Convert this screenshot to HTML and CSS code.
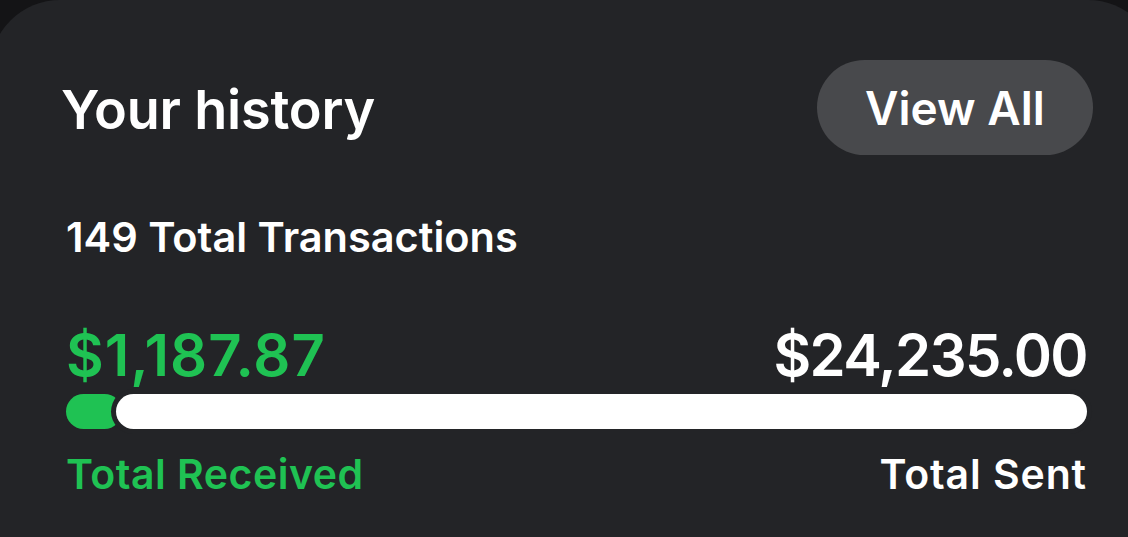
FILE: index.html
```html
<!DOCTYPE html>
<html lang="en">
<head>
<meta charset="utf-8">
<link rel="stylesheet" href="styles.css">
<title>Your history</title>
</head>
<body>
<section class="card">
  <header class="head">
    <h1 class="title">Your history</h1>
    <button class="view-all">View All</button>
  </header>
  <p class="count">149 Total Transactions</p>
  <div class="amounts">
    <span class="amt amt-received">$1,187.87</span>
    <span class="amt amt-sent">$24,235.00</span>
  </div>
  <div class="bar">
    <div class="bar-received"></div>
    <div class="bar-sent"></div>
  </div>
  <div class="labels">
    <span class="label label-received">Total Received</span>
    <span class="label label-sent">Total Sent</span>
  </div>
</section>
</body>
</html>
```
FILE: styles.css
```css
html, body {
  margin: 0;
  padding: 0;
  background: #141416;
  height: 537px;
  overflow: hidden;
}
body {
  font-family: Inter, "Noto Sans", sans-serif;
  color: #ffffff;
}
.card {
  margin-left: -10px;
  width: 1168px;
  height: 537px;
  box-sizing: border-box;
  background: #232427;
  border-radius: 70px 70px 0 0;
  padding: 60px 71px 0 76px;
}
.head {
  display: flex;
  justify-content: space-between;
  align-items: center;
  height: 95px;
}
.title {
  margin: 5px 0 0 -5px;
  font-size: 54px;
  line-height: 1;
  font-weight: 600;
  letter-spacing: -0.2px;
}
.view-all {
  font-family: inherit;
  height: 95px;
  width: 276px;
  border: none;
  border-radius: 48px;
  background: #48494c;
  color: #fff;
  font-size: 46px;
  line-height: 1;
  font-weight: 600;
  padding: 0;
  margin-right: -6px;
}
.count {
  margin: 62px 0 0;
  font-size: 41.5px;
  line-height: 1;
  font-weight: 600;
}
.amounts, .labels {
  display: flex;
  justify-content: space-between;
  align-items: flex-end;
}
.amounts {
  margin-top: 67px;
}
.amt {
  font-size: 58px;
  line-height: 1;
  font-weight: 600;
}
.amt-received {
  letter-spacing: 1px;
}
.amt-sent {
  letter-spacing: -1.6px;
}
.amt-received, .label-received {
  color: #1fc253;
}
.bar {
  display: flex;
  margin-top: 10px;
  height: 35px;
}
.bar-received {
  width: 56px;
  height: 35px;
  border-radius: 18px;
  background: #1fc253;
}
.bar-sent {
  flex: 1;
  height: 35px;
  margin-left: -6px;
  border-radius: 18px;
  background: #ffffff;
  box-shadow: 0 0 0 5px #232427;
}
.labels {
  margin-top: 25px;
}
.label {
  font-size: 41px;
  line-height: 1;
  font-weight: 600;
  letter-spacing: 0.5px;
}
.label-sent {
  letter-spacing: 0.9px;
}
```
